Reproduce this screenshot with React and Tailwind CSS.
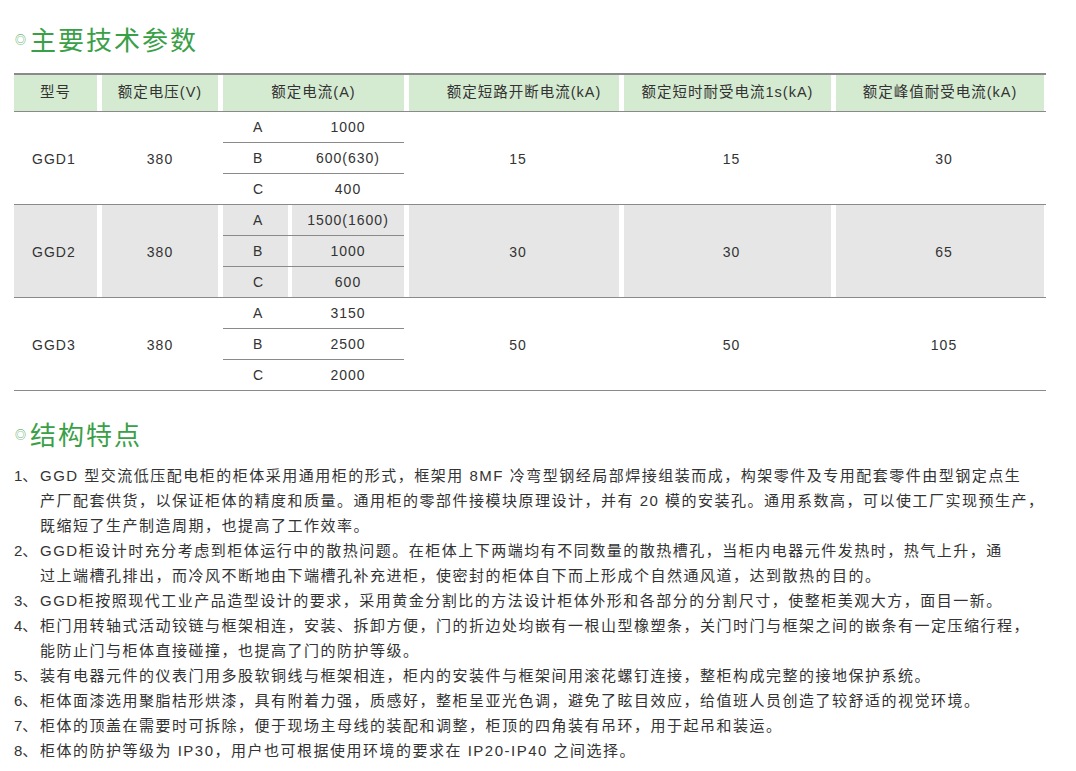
import React from "react";

const F = { fontFamily: '"Liberation Sans","Noto Sans CJK SC",sans-serif' };
const W = ["w-[83px]", "w-[116px]", "w-[65px]", "w-[112px]", "w-[210px]", "w-[207px]", "w-[208px]"];

function Title({ children }) {
  return (
    <div className="flex items-center h-[44px] pl-[15px]">
      <span className="text-[#3aa047] text-[11px] mr-[4px] mt-[4px]">◎</span>
      <span className="text-[#3aa047] text-[26px] tracking-[2px]" style={{ fontFamily: '"Noto Sans CJK SC",sans-serif' }}>{children}</span>
    </div>
  );
}

function Block({ model, subs, vals, bg }) {
  const cell = bg ? "bg-[#e6e6e6]" : "";
  return (
    <div className="flex gap-[5px] border-b border-[#8a8a8a] h-[93px] text-[14px] text-[#333] tracking-[1px]">
      <div className={`${W[0]} ${cell} flex items-center pl-[18px] pt-[3px]`}>{model}</div>
      <div className={`${W[1]} ${cell} flex items-center justify-center pt-[3px]`}>380</div>
      <div className="w-[181px] flex flex-col">
        {subs.map(([l, v], i) => (
          <div key={i} className={`flex gap-[4px] flex-1 ${i < 2 ? "border-b border-[#8a8a8a]" : ""}`}>
            <div className={`${W[2]} ${cell} flex items-center pl-[30px] pt-[1px]`}>{l}</div>
            <div className={`${W[3]} ${cell} flex items-center justify-center pt-[1px]`}>{v}</div>
          </div>
        ))}
      </div>
      {vals.map((v, i) => (
        <div key={i} className={`${W[4 + i]} ${cell} flex items-center justify-center pl-[8px] pt-[3px]`}>{v}</div>
      ))}
    </div>
  );
}

const items = [
  ["1、", "GGD 型交流低压配电柜的柜体采用通用柜的形式，框架用 8MF 冷弯型钢经局部焊接组装而成，构架零件及专用配套零件由型钢定点生", "产厂配套供货，以保证柜体的精度和质量。通用柜的零部件接模块原理设计，并有 20 模的安装孔。通用系数高，可以使工厂实现预生产，", "既缩短了生产制造周期，也提高了工作效率。"],
  ["2、", "GGD柜设计时充分考虑到柜体运行中的散热问题。在柜体上下两端均有不同数量的散热槽孔，当柜内电器元件发热时，热气上升，通", "过上端槽孔排出，而冷风不断地由下端槽孔补充进柜，使密封的柜体自下而上形成个自然通风道，达到散热的目的。"],
  ["3、", "GGD柜按照现代工业产品造型设计的要求，采用黄金分割比的方法设计柜体外形和各部分的分割尺寸，使整柜美观大方，面目一新。"],
  ["4、", "柜门用转轴式活动铰链与框架相连，安装、拆卸方便，门的折边处均嵌有一根山型橡塑条，关门时门与框架之间的嵌条有一定压缩行程，", "能防止门与柜体直接碰撞，也提高了门的防护等级。"],
  ["5、", "装有电器元件的仪表门用多股软铜线与框架相连，柜内的安装件与框架间用滚花螺钉连接，整柜构成完整的接地保护系统。"],
  ["6、", "柜体面漆选用聚脂桔形烘漆，具有附着力强，质感好，整柜呈亚光色调，避免了眩目效应，给值班人员创造了较舒适的视觉环境。"],
  ["7、", "柜体的顶盖在需要时可拆除，便于现场主母线的装配和调整，柜顶的四角装有吊环，用于起吊和装运。"],
  ["8、", "柜体的防护等级为 IP30，用户也可根据使用环境的要求在 IP20-IP40 之间选择。"],
];

export default function App() {
  const hd = "bg-[#d5ebd1] flex items-center justify-center";
  return (
    <div className="w-[1076px] h-[771px] bg-white pt-[16px]" style={F}>
      <Title>主要技术参数</Title>
      <div className="ml-[14px] w-[1032px] mt-[13px]">
        <div className="flex gap-[5px] h-[39px] border-t-2 border-b border-[#8a8a8a] text-[14.5px] text-[#333] tracking-[1px]">
          <div className={`${W[0]} ${hd}`}>型号</div>
          <div className={`${W[1]} ${hd}`}>额定电压(V)</div>
          <div className={`w-[181px] ${hd}`}>额定电流(A)</div>
          <div className={`${W[4]} ${hd} pl-[20px]`}>额定短路开断电流(kA)</div>
          <div className={`${W[5]} ${hd}`}>额定短时耐受电流1s(kA)</div>
          <div className={`${W[6]} ${hd}`}>额定峰值耐受电流(kA)</div>
        </div>
        <Block model="GGD1" subs={[["A", "1000"], ["B", "600(630)"], ["C", "400"]]} vals={["15", "15", "30"]} />
        <Block model="GGD2" bg subs={[["A", "1500(1600)"], ["B", "1000"], ["C", "600"]]} vals={["30", "30", "65"]} />
        <Block model="GGD3" subs={[["A", "3150"], ["B", "2500"], ["C", "2000"]]} vals={["50", "50", "105"]} />
      </div>
      <div className="mt-[20px]"><Title>结构特点</Title></div>
      <div className="mt-[8px] pl-[14px] text-[15px] text-[#333] leading-[25px] tracking-[1.5px]">
        {items.map(([n, ...lines], i) => (
          <div key={i} className="flex">
            <span className="w-[26px] shrink-0 tracking-normal">{n}</span>
            <div>{lines.map((l, j) => <div key={j} className="whitespace-nowrap">{l}</div>)}</div>
          </div>
        ))}
      </div>
    </div>
  );
}
